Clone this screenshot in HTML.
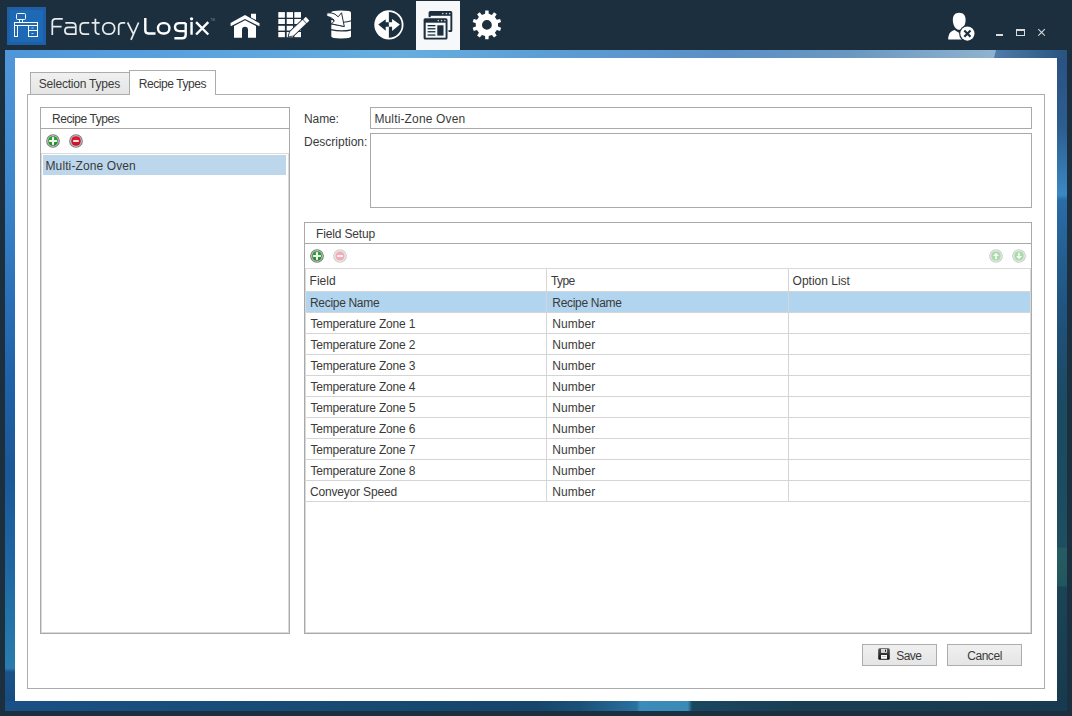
<!DOCTYPE html>
<html><head><meta charset="utf-8">
<style>
*{box-sizing:border-box;margin:0;padding:0}
html,body{width:1072px;height:716px;overflow:hidden;background:#1b2f3e;font-family:"Liberation Sans",sans-serif;font-size:12px;color:#3a3a3a}
.a{position:absolute}
.t{position:absolute;line-height:14px;white-space:nowrap;letter-spacing:0px}
#wall{left:5px;top:50px;width:1062px;height:661px;background:linear-gradient(90deg,#4f96d8 0%,#5aa3de 18.4%,#67aedf 37.2%,#5c9dd4 51.3%,#5a8fc5 67.3%,#6a97c0 79.6%,#8fb3cf 93.2%,#8fb3cf 94%,#27527f 100%)}
#wl{left:5px;top:58px;width:10px;height:643px;background:linear-gradient(180deg,#4f97d8 0%,#3a84ca 22.1%,#2a70b8 37.6%,#2062a8 50%,#1a5898 64%,#1d64a0 76.5%,#2274a8 87.4%,#2a7cae 94.9%,#1a5288 95.5%,#174c80 100%)}
#wr{left:1057px;top:58px;width:10px;height:643px;background:linear-gradient(180deg,#2a5282 0%,#2c5e90 10.9%,#3a88c4 21.3%,#2a6ca8 22.1%,#235e90 31.4%,#1f5078 42.3%,#1c4a62 53%,#1c4a60 61%,#1e4e60 76%,#255c64 76.3%,#22565f 82%,#1b4356 82.3%,#183a4e 100%)}
#wb{left:5px;top:701px;width:1062px;height:10px;background:linear-gradient(90deg,#1a5085 0%,#174a74 30%,#16456c 50%,#1a5078 54.1%,#2a70a0 59.5%,#3b8cba 59.8%,#3a8ab8 64.3%,#1b4660 64.7%,#193e54 75%,#183a50 100%)}
#white{left:15px;top:58px;width:1042px;height:643px;background:#fff}
.box{position:absolute;border:1px solid #a9a9a9;background:#fff}
.btn{position:absolute;border:1px solid #adadad;background:linear-gradient(180deg,#f0f0f0,#e5e5e5)}
.hl{position:absolute;height:1px;background:#d5d5d5}
.vl{position:absolute;width:1px;background:#d5d5d5}
</style></head><body>

<!-- title bar -->
<div class="a" style="left:7px;top:7px;width:39px;height:38px;background:#1f5fa8;box-shadow:inset 0 0 0 3px #1f5fa8"><div class="a" style="left:3px;top:3px;width:33px;height:32px;background:#1e69b4"></div></div>
<div class="a" style="left:416px;top:1px;width:44px;height:49px;background:#f7f8fa"></div>

<!-- title svg -->
<svg class="a" style="left:0;top:0" width="1072" height="50" viewBox="0 0 1072 50">
 <!-- logo desk -->
 <g fill="none" stroke="#fff" stroke-width="1">
  <rect x="16.5" y="13.5" width="9" height="6" rx="1"/>
  <path d="M19.5 19.5v3M22.5 19.5v3"/>
  <rect x="14.5" y="22.5" width="23" height="3"/>
  <rect x="14.5" y="25.5" width="3" height="11"/>
  <rect x="28.5" y="25.5" width="9" height="11"/>
  <path d="M28.5 30.5h9"/>
 </g>
 <g fill="#fff" opacity="0.7"><rect x="31.5" y="27.5" width="2" height="1"/><rect x="31.5" y="33" width="2" height="1"/></g>
 <!-- FactoryLogix -->
 <g fill="none" stroke="#e8eaec" stroke-width="1.75" stroke-linecap="butt" stroke-linejoin="round">
  <path d="M52.3 35 V22.2 Q52.3 18.9 55.6 18.9 H62.8 M52.3 26.6 H61.6"/>
  <path d="M65.3 22.9 H72.3 Q75.8 22.9 75.8 26.4 V35 M75.8 27.4 H68.2 Q64.9 27.4 64.9 30.75 Q64.9 34.1 68.2 34.1 H75.8"/>
  <path d="M89.2 22.9 H84.3 Q80.2 22.9 80.2 27 V30 Q80.2 34.1 84.3 34.1 H89.2"/>
  <path d="M95.4 18.7 V30.6 Q95.4 34.1 98.6 34.1 H99.6 M91.6 22.9 H99.6"/>
  <rect x="102.8" y="22.9" width="11.8" height="11.2" rx="5" ry="5"/>
  <path d="M118.7 35 V26.6 Q118.7 22.9 122.4 22.9 H125.2"/>
  <path d="M127.6 22.5 L133.2 33.6 M138.6 22.5 L131 39.8"/>
 </g>
 <g fill="none" stroke="#fff" stroke-width="2.4" stroke-linejoin="round">
  <path d="M145.3 18.1 V30.6 Q145.3 33.5 148.2 33.5 H155.5"/>
  <rect x="158" y="23.1" width="11.4" height="10.4" rx="5" ry="5"/>
  <path d="M185.7 23.1 H179.6 Q175 23.1 175 27.1 Q175 31.1 179.6 31.1 H185.7 M185.7 23.1 V34.8 Q185.7 38.3 182.2 38.3 H174.4"/>
  <path d="M191.55 21.9 V34.7"/>
  <path d="M196.1 22.2 L208.3 34.5 M208.3 22.2 L196.1 34.5"/>
 </g>
 <circle cx="191.55" cy="18.85" r="1.65" fill="#fff"/>
 <text x="210.3" y="20.8" font-family="Liberation Sans" font-size="3.2" fill="#7d8a95">TM</text>
 <!-- home -->
 <g transform="translate(226,9)" fill="#fff">
  <polygon points="4.5,14.1 19,6 33.5,14.3 33.5,17.2 19,9.9 4.7,17.2"/>
  <polygon points="25,4.7 30,4.7 30,11.1 25,8.4"/>
  <path d="M8 17 L19 11.2 L30 17 L30 28.8 L22 28.8 L22 20.7 A3 3 0 0 0 16 20.7 L16 28.8 L8 28.8 Z"/>
 </g>
 <!-- grid pencil -->
 <g transform="translate(274,9)">
  <g fill="#fff">
   <rect x="4.3" y="3.1" width="6.6" height="5.6"/><rect x="12.7" y="3.1" width="6.3" height="5.6"/><rect x="20.3" y="3.1" width="6.7" height="5.6"/>
   <rect x="4.3" y="10" width="6.6" height="5"/><rect x="12.7" y="10" width="6.3" height="5"/><rect x="20.3" y="10" width="6.7" height="5"/>
   <rect x="4.3" y="16.8" width="6.6" height="4.8"/><rect x="12.7" y="16.8" width="6.3" height="4.8"/><rect x="20.3" y="16.8" width="6.7" height="4.8"/>
   <rect x="4.3" y="23" width="6.6" height="5.2"/><rect x="12.7" y="23" width="6.3" height="5.2"/><rect x="20.3" y="23" width="6.7" height="5.2"/>
  </g>
  <g fill="#1b2f3e" stroke="#1b2f3e" stroke-width="2.4" stroke-linejoin="round">
   <polygon points="15,27.2 16.3,22.8 28.7,11.1 31.9,14.5 19.5,26.2"/>
   <polygon points="30.01,10.33 31.83,8.62 34.57,11.54 32.75,13.25"/>
  </g>
  <g fill="#fff" stroke="#fff" stroke-width="0.6" stroke-linejoin="round">
   <polygon points="15,27.2 16.3,22.8 28.7,11.1 31.9,14.5 19.5,26.2"/>
   <polygon points="30.01,10.33 31.83,8.62 34.57,11.54 32.75,13.25" stroke-width="1.2"/>
  </g>
 </g>
 <!-- database -->
 <g transform="translate(322,8)">
  <path d="M9.3 4.5 Q9.3 2.6 19 2.6 Q29 2.6 29 4.5 L29 28.5 Q29 30.4 19 30.4 Q9.3 30.4 9.3 28.5 Z" fill="#fff"/>
  <path d="M21.5 14.3 Q25 14.2 29.5 12.8" stroke="#1b2f3e" stroke-width="1.1" fill="none"/>
  <path d="M9 21.6 Q19 24.2 29.5 21.8" stroke="#1b2f3e" stroke-width="1.2" fill="none"/>
  <path d="M9 15.9 Q15 16.8 22.3 18.5" stroke="#1b2f3e" stroke-width="1.1" fill="none"/>
  <path d="M4.8 4.9 Q10 4.4 13 6.2 L16.2 8.8 L19.5 4.75 L22.3 18.5 L9.5 15.9 L12.2 13 Q10.5 11.2 8.7 11 L12.3 12.2 Q9 8.7 4.8 8.3 Z" fill="#fff" stroke="#1b2f3e" stroke-width="1" stroke-linejoin="miter"/>
 </g>
 <!-- arrows circle -->
 <g transform="translate(370,8)">
  <circle cx="18.9" cy="16.85" r="14.6" fill="#fff"/>
  <path d="M18.9 4.1 A12.8 12.8 0 0 1 18.9 29.7 Z" fill="#1b2f3e"/>
  <polygon points="8.3,16.6 15.7,11.2 15.7,14.25 18.9,14.25 18.9,18.8 15.7,18.8 15.7,22.8" fill="#1b2f3e"/>
  <polygon points="29.9,16.6 22.1,11 22.1,14.25 18.9,14.25 18.9,18.8 22.1,18.8 22.1,22.9" fill="#fff"/>
 </g>
 <!-- windows (active) -->
 <g fill="#1d2f3e">
  <rect x="428.6" y="11.1" width="23.7" height="20.9" rx="1.6"/>
  <rect x="430.7" y="15.8" width="19.7" height="14.3" fill="#f7f8fa"/>
  <rect x="422.6" y="17.2" width="25.9" height="23.4" fill="#f7f8fa"/>
  <rect x="423.6" y="18.2" width="23.9" height="21.4" rx="1.6"/>
  <rect x="425.7" y="22.7" width="19.9" height="15" fill="#f7f8fa"/>
  <rect x="427.6" y="25" width="7.8" height="1.3"/><rect x="427.6" y="28.1" width="7.8" height="1.3"/><rect x="427.6" y="31.1" width="7.8" height="1.3"/><rect x="427.6" y="34.4" width="7.8" height="1.3"/>
  <rect x="437.3" y="25.3" width="6.2" height="10.3"/>
 </g>
 <g fill="#c9d0d6"><circle cx="442.8" cy="13.6" r="0.8"/><circle cx="446.4" cy="13.6" r="0.8"/><circle cx="449.7" cy="13.6" r="0.8"/>
  <circle cx="438.3" cy="20.6" r="0.8"/><circle cx="441.6" cy="20.6" r="0.8"/><circle cx="444.9" cy="20.6" r="0.8"/></g>
 <!-- gear -->
 <g transform="translate(486.9,24.9)" fill="#fff">
  <path fill-rule="evenodd" d="M-1.85 -11.05 L-1.64 -14.41 L1.64 -14.41 L1.85 -11.05 L5.00 -10.02 L7.14 -12.62 L9.80 -10.69 L7.99 -7.85 L9.93 -5.17 L13.19 -6.01 L14.21 -2.89 L11.08 -1.66 L11.08 1.66 L14.21 2.89 L13.19 6.01 L9.93 5.17 L7.99 7.85 L9.80 10.69 L7.14 12.62 L5.00 10.02 L1.85 11.05 L1.64 14.41 L-1.64 14.41 L-1.85 11.05 L-5.00 10.02 L-7.14 12.62 L-9.80 10.69 L-7.99 7.85 L-9.93 5.17 L-13.19 6.01 L-14.21 2.89 L-11.08 1.66 L-11.08 -1.66 L-14.21 -2.89 L-13.19 -6.01 L-9.93 -5.17 L-7.99 -7.85 L-9.80 -10.69 L-7.14 -12.62 L-5.00 -10.02 Z M4.9 0 A4.9 4.9 0 1 0 -4.9 0 A4.9 4.9 0 1 0 4.9 0 Z"/>
 </g>
 <!-- user -->
 <g fill="#fff">
  <path d="M959.2 12.75 C963.5 12.75 965.6 15.5 965.6 20 C965.6 25.5 962.5 29.85 959.2 29.85 C955.9 29.85 952.8 25.5 952.8 20 C952.8 15.5 954.9 12.75 959.2 12.75 Z"/>
  <path d="M948.2 39.6 C948.2 34 950.5 31 954.6 30 L959.2 33 L963.8 30 C967.9 31 970.2 34 970.2 39.6 Z"/>
  <circle cx="967.4" cy="33.6" r="8.3" fill="#1b2f3e"/>
  <circle cx="967.4" cy="33.6" r="7.1"/>
  <path d="M964.3 30.5 L970.5 36.7 M970.5 30.5 L964.3 36.7" stroke="#1b2f3e" stroke-width="2.1"/>
 </g>
 <!-- window controls -->
 <g fill="#dadada">
  <rect x="996" y="34" width="7" height="2"/>
  <path d="M1016 29h9v7h-9z M1017 31v4h7v-4z" fill-rule="evenodd"/>
 </g>
 <path d="M1038.3 29.2 L1044.8 35.7 M1044.8 29.2 L1038.3 35.7" stroke="#dadada" stroke-width="1.1"/>
</svg>

<!-- wallpaper frame -->
<div id="wall" class="a"></div>
<div id="wl" class="a"></div>
<div id="wr" class="a"></div>
<div id="wb" class="a"></div>
<svg class="a" style="left:0;top:50px" width="1072" height="8" viewBox="0 50 1072 8"><defs><linearGradient id="wg" x1="994" y1="0" x2="1067" y2="0" gradientUnits="userSpaceOnUse"><stop offset="0" stop-color="#4f7ca8"/><stop offset="1" stop-color="#28537f"/></linearGradient></defs><polygon points="996,50 1067,50 1067,58 994,58" fill="url(#wg)"/></svg>
<div id="white" class="a"></div>

<!-- tab content border -->
<div class="box" style="left:27px;top:94px;width:1018px;height:595px;border-color:#acacac"></div>
<div class="a" style="left:30px;top:72px;width:100px;height:23px;border:1px solid #acacac;background:linear-gradient(180deg,#f0f0f0,#e5e5e5)"></div>
<div class="a" style="left:129px;top:70px;width:87px;height:25px;border:1px solid #acacac;border-bottom:none;background:#fff"></div>
<div class="t" style="left:38.8px;top:77px;letter-spacing:-0.22px">Selection Types</div>
<div class="t" style="left:138.7px;top:77px;letter-spacing:-0.42px">Recipe Types</div>

<!-- left group -->
<div class="box" style="left:40px;top:107px;width:250px;height:527px"></div>
<div class="a" style="left:41px;top:153px;width:248px;height:480px;border:1px solid #dadada"></div>
<div class="a" style="left:41px;top:128px;width:248px;height:1px;background:#a9a9a9"></div>
<div class="a" style="left:43px;top:155px;width:243px;height:20px;background:#bcd7ec"></div>
<div class="t" style="left:52.0px;top:112px;letter-spacing:-0.42px">Recipe Types</div>
<div class="t" style="left:45.5px;top:159px;letter-spacing:0.11px">Multi-Zone Oven</div>

<!-- name / description -->
<div class="t" style="left:304.0px;top:112px;letter-spacing:-0.1px">Name:</div>
<div class="t" style="left:304.0px;top:134.7px;letter-spacing:0px">Description:</div>
<div class="box" style="left:370px;top:107px;width:662px;height:22px"></div>
<div class="t" style="left:374.4px;top:112px;letter-spacing:0.15px">Multi-Zone Oven</div>
<div class="box" style="left:370px;top:133px;width:662px;height:75px"></div>

<!-- field setup -->
<div class="box" style="left:304px;top:222px;width:728px;height:412px"></div>
<div class="a" style="left:305px;top:243px;width:726px;height:1px;background:#a9a9a9"></div>
<div class="t" style="left:316.0px;top:226.7px;letter-spacing:-0.15px">Field Setup</div>
<div class="a" style="left:305px;top:268px;width:726px;height:1px;background:#d9d9d9"></div>

<!-- grid -->
<div class="a" style="left:305px;top:269px;width:726px;height:364px;border:1px solid #dadada;border-top:none"></div>
<div class="hl" style="left:306px;top:291px;width:724px"></div>
<div class="vl" style="left:546px;top:269px;height:233px"></div>
<div class="vl" style="left:788px;top:269px;height:233px"></div>
<div class="t" style="left:309.6px;top:273.5px;letter-spacing:0px">Field</div>
<div class="t" style="left:551.0px;top:273.5px;letter-spacing:-0.6px">Type</div>
<div class="t" style="left:792.6px;top:273.5px;letter-spacing:0px">Option List</div>
<div class="a" style="left:306px;top:292px;width:724px;height:20px;background:#b2d5ef"></div>
<div class="vl" style="left:546px;top:292px;height:20px;background:#d5d5d5"></div>
<div class="vl" style="left:788px;top:292px;height:20px"></div>
<div class="hl" style="left:306px;top:312px;width:724px"></div>
<div class="t" style="left:310.0px;top:295.5px;letter-spacing:-0.31px">Recipe Name</div>
<div class="t" style="left:552.3px;top:295.5px;letter-spacing:-0.31px">Recipe Name</div>
<div class="hl" style="left:306px;top:333px;width:724px"></div>
<div class="t" style="left:310.5px;top:316.5px;letter-spacing:-0.19px">Temperature Zone 1</div>
<div class="t" style="left:552.2px;top:316.5px;letter-spacing:0.1px">Number</div>
<div class="hl" style="left:306px;top:354px;width:724px"></div>
<div class="t" style="left:310.5px;top:337.5px;letter-spacing:-0.19px">Temperature Zone 2</div>
<div class="t" style="left:552.2px;top:337.5px;letter-spacing:0.1px">Number</div>
<div class="hl" style="left:306px;top:375px;width:724px"></div>
<div class="t" style="left:310.5px;top:358.5px;letter-spacing:-0.19px">Temperature Zone 3</div>
<div class="t" style="left:552.2px;top:358.5px;letter-spacing:0.1px">Number</div>
<div class="hl" style="left:306px;top:396px;width:724px"></div>
<div class="t" style="left:310.5px;top:379.5px;letter-spacing:-0.19px">Temperature Zone 4</div>
<div class="t" style="left:552.2px;top:379.5px;letter-spacing:0.1px">Number</div>
<div class="hl" style="left:306px;top:417px;width:724px"></div>
<div class="t" style="left:310.5px;top:400.5px;letter-spacing:-0.19px">Temperature Zone 5</div>
<div class="t" style="left:552.2px;top:400.5px;letter-spacing:0.1px">Number</div>
<div class="hl" style="left:306px;top:438px;width:724px"></div>
<div class="t" style="left:310.5px;top:421.5px;letter-spacing:-0.19px">Temperature Zone 6</div>
<div class="t" style="left:552.2px;top:421.5px;letter-spacing:0.1px">Number</div>
<div class="hl" style="left:306px;top:459px;width:724px"></div>
<div class="t" style="left:310.5px;top:442.5px;letter-spacing:-0.19px">Temperature Zone 7</div>
<div class="t" style="left:552.2px;top:442.5px;letter-spacing:0.1px">Number</div>
<div class="hl" style="left:306px;top:480px;width:724px"></div>
<div class="t" style="left:310.5px;top:463.5px;letter-spacing:-0.19px">Temperature Zone 8</div>
<div class="t" style="left:552.2px;top:463.5px;letter-spacing:0.1px">Number</div>
<div class="hl" style="left:306px;top:501px;width:724px"></div>
<div class="t" style="left:310.0px;top:484.5px;letter-spacing:-0.18px">Conveyor Speed</div>
<div class="t" style="left:552.2px;top:484.5px;letter-spacing:0.1px">Number</div>

<!-- buttons -->
<div class="btn" style="left:862px;top:644px;width:75px;height:22px"></div>
<div class="btn" style="left:947px;top:644px;width:75px;height:22px"></div>
<div class="t" style="left:896.3px;top:648.8px;letter-spacing:-0.6px">Save</div>
<div class="t" style="left:967.2px;top:648.8px;letter-spacing:-0.45px">Cancel</div>

<!-- toolbar icons -->
<svg class="a" style="left:46px;top:134px" width="14" height="14" viewBox="0 0 14 14"><defs>
  <radialGradient id="gg" cx="50%" cy="40%" r="60%"><stop offset="0" stop-color="#34c23a"/><stop offset="1" stop-color="#15861c"/></radialGradient>
  <radialGradient id="rg" cx="50%" cy="40%" r="60%"><stop offset="0" stop-color="#f0203a"/><stop offset="1" stop-color="#c80a22"/></radialGradient>
 </defs><circle cx="7" cy="7" r="6.3" fill="#ededed" stroke="#7a7a7a" stroke-width="1.1"/><circle cx="7" cy="7" r="5.1" fill="none" stroke="#8c8c8c" stroke-width="0.6"/><circle cx="7" cy="7" r="4.8" fill="url(#gg)"/><rect x="6" y="3.1" width="2" height="7.8" fill="#f4f0f6"/><rect x="3.1" y="6" width="7.8" height="2" fill="#f4f0f6"/></svg>
<svg class="a" style="left:69px;top:134px" width="14" height="14" viewBox="0 0 14 14"><circle cx="7" cy="7" r="6.3" fill="#ededed" stroke="#7a7a7a" stroke-width="1.1"/><circle cx="7" cy="7" r="5.1" fill="none" stroke="#8c8c8c" stroke-width="0.6"/><circle cx="7" cy="7" r="4.8" fill="url(#rg)"/><rect x="4.15" y="6.1" width="5.7" height="1.8" fill="#eefafa"/></svg>
<svg class="a" style="left:310px;top:249px" width="14" height="14" viewBox="0 0 14 14"><circle cx="7" cy="7" r="6.3" fill="#ededed" stroke="#7a7a7a" stroke-width="1.1"/><circle cx="7" cy="7" r="5.1" fill="none" stroke="#8c8c8c" stroke-width="0.6"/><circle cx="7" cy="7" r="4.8" fill="url(#gg)"/><rect x="6" y="3.1" width="2" height="7.8" fill="#f4f0f6"/><rect x="3.1" y="6" width="7.8" height="2" fill="#f4f0f6"/></svg>
<svg class="a" style="left:333px;top:249px" width="14" height="14" viewBox="0 0 14 14"><circle cx="7" cy="7" r="6.3" fill="#f7f7f7" stroke="#cdcdcd" stroke-width="1.1"/><circle cx="7" cy="7" r="5.1" fill="none" stroke="#d6d6d6" stroke-width="0.6"/><circle cx="7" cy="7" r="4.6" fill="#f5a9b9"/><rect x="4.15" y="6.1" width="5.7" height="1.8" fill="#f2fbfb"/></svg>
<svg class="a" style="left:989px;top:249px" width="14" height="14" viewBox="0 0 14 14"><circle cx="7" cy="7" r="6.3" fill="#f7f7f7" stroke="#cdcdcd" stroke-width="1.1"/><circle cx="7" cy="7" r="5.1" fill="none" stroke="#d6d6d6" stroke-width="0.6"/><circle cx="7" cy="7" r="4.8" fill="#a8dca8"/><path d="M7 3.8 L10 7.1 L7.8 7.1 L7.8 10.2 L6.2 10.2 L6.2 7.1 L4 7.1 Z" fill="#fafafa"/></svg>
<svg class="a" style="left:1012px;top:249px" width="14" height="14" viewBox="0 0 14 14"><circle cx="7" cy="7" r="6.3" fill="#f7f7f7" stroke="#cdcdcd" stroke-width="1.1"/><circle cx="7" cy="7" r="5.1" fill="none" stroke="#d6d6d6" stroke-width="0.6"/><circle cx="7" cy="7" r="4.8" fill="#a8dca8"/><path d="M7 10.2 L10 6.9 L7.8 6.9 L7.8 3.8 L6.2 3.8 L6.2 6.9 L4 6.9 Z" fill="#fafafa"/></svg>
<!-- save icon -->
<svg class="a" style="left:878px;top:648px" width="12" height="12" viewBox="0 0 12 12">
 <defs><linearGradient id="fg" x1="0" y1="0" x2="0" y2="1"><stop offset="0" stop-color="#555"/><stop offset="1" stop-color="#111"/></linearGradient></defs>
 <rect x="0.2" y="0.2" width="11.6" height="11.6" rx="1.5" fill="url(#fg)"/>
 <rect x="3" y="1" width="6.1" height="3.9" fill="#d8d8d8"/>
 <rect x="7" y="1.7" width="1" height="2.1" fill="#222"/>
 <rect x="3" y="7" width="6" height="3.8" fill="#fafafa"/>
 <rect x="4" y="8.2" width="4" height="0.8" fill="#bbb"/>
</svg>

</body></html>
